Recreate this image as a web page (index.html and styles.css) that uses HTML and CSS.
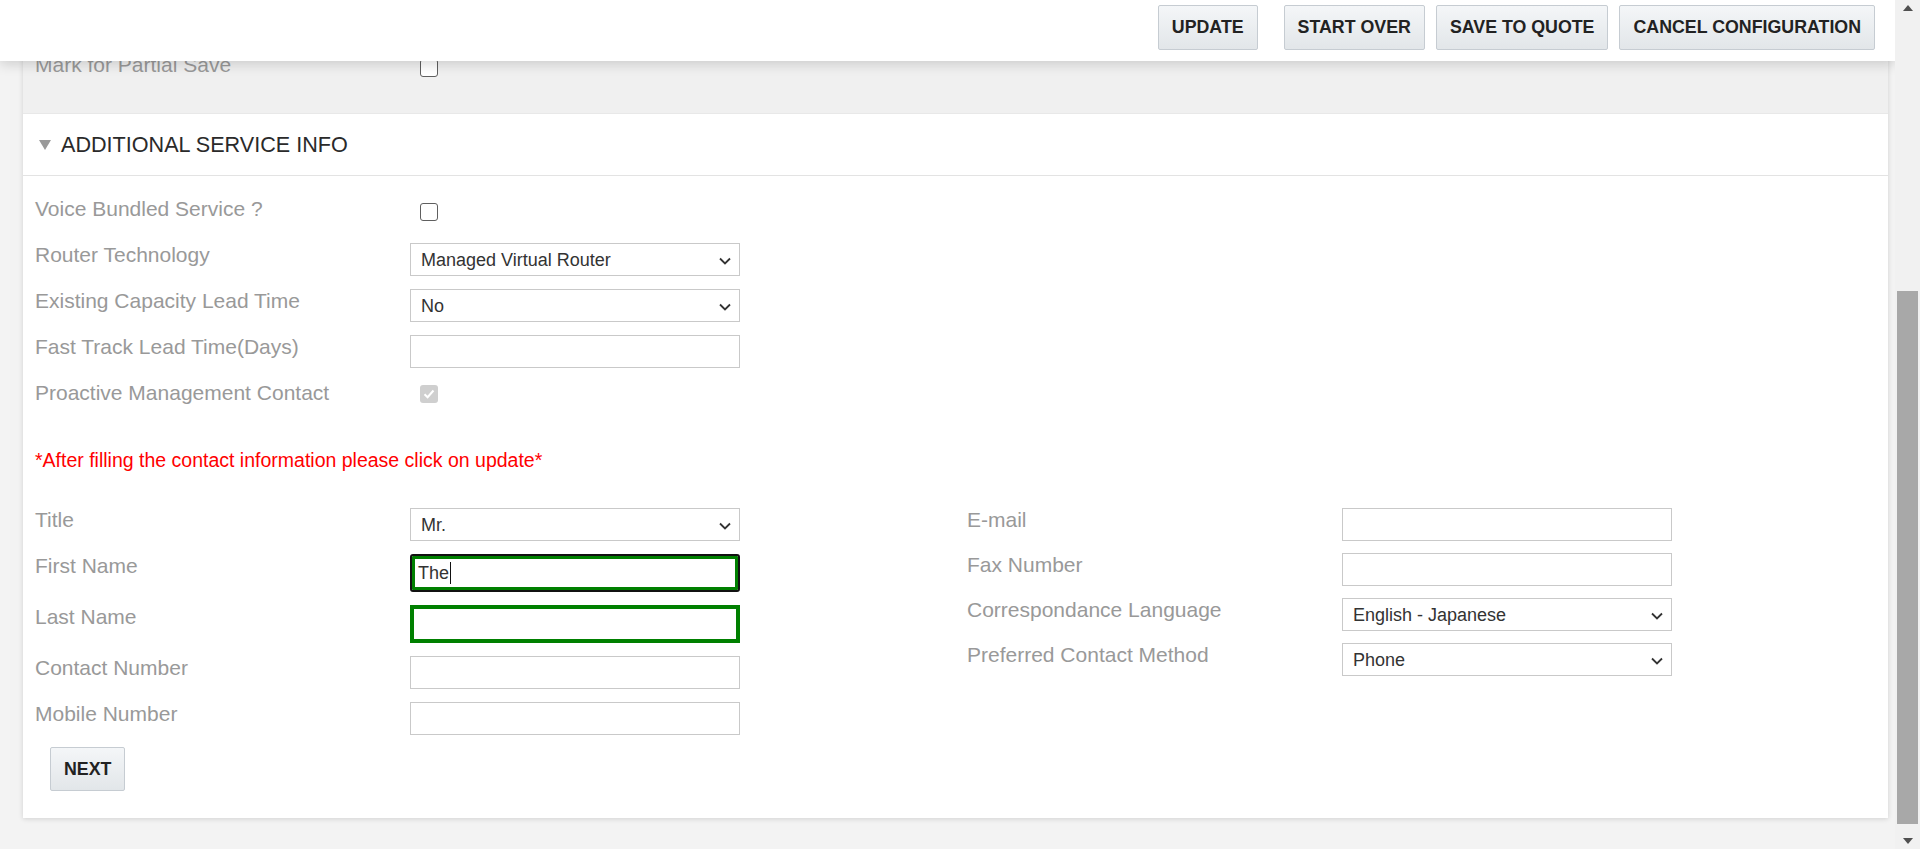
FILE: index.html
```html
<!DOCTYPE html>
<html lang="en">
<head>
<meta charset="utf-8">
<title>Configuration</title>
<link rel="stylesheet" href="styles.css">
</head>
<body>
<div class="app">
  <div class="viewport">
    <header class="topbar">
      <div class="actions">
        <button class="btn">UPDATE</button>
        <div class="btn-group">
          <button class="btn">START OVER</button>
          <button class="btn">SAVE TO QUOTE</button>
          <button class="btn">CANCEL CONFIGURATION</button>
        </div>
      </div>
    </header>

    <main class="card">
      <section class="prev-section">
        <div class="row">
          <span class="label">Mark for Partial Save</span>
          <div class="ctl"><span class="checkbox"></span></div>
        </div>
      </section>

      <section class="section">
        <div class="section-head">
          <svg class="caret-down" width="12" height="10" viewBox="0 0 12 10"><polygon points="0,0 12,0 6,10" fill="#9a9a9a"/></svg>
          <h2 class="section-title">ADDITIONAL SERVICE INFO</h2>
        </div>

        <div class="section-body">
          <div class="row">
            <span class="label">Voice Bundled Service ?</span>
            <div class="ctl"><span class="checkbox"></span></div>
          </div>
          <div class="row">
            <span class="label">Router Technology</span>
            <div class="ctl"><div class="select"><span>Managed Virtual Router</span><svg width="12" height="8" viewBox="0 0 12 8"><path d="M1 1.5 L6 6.5 L11 1.5" fill="none" stroke="#333" stroke-width="1.8"/></svg></div></div>
          </div>
          <div class="row">
            <span class="label">Existing Capacity Lead Time</span>
            <div class="ctl"><div class="select"><span>No</span><svg width="12" height="8" viewBox="0 0 12 8"><path d="M1 1.5 L6 6.5 L11 1.5" fill="none" stroke="#333" stroke-width="1.8"/></svg></div></div>
          </div>
          <div class="row">
            <span class="label">Fast Track Lead Time(Days)</span>
            <div class="ctl"><div class="input"></div></div>
          </div>
          <div class="row row-last">
            <span class="label">Proactive Management Contact</span>
            <div class="ctl"><span class="checkbox checked-disabled"><svg width="12" height="10" viewBox="0 0 12 10"><path d="M1.5 5.2 L4.6 8.2 L10.5 1.5" fill="none" stroke="#fff" stroke-width="2"/></svg></span></div>
          </div>

          <p class="note">*After filling the contact information please click on update*</p>

          <div class="contact-grid">
            <div class="col col-left">
              <div class="row">
                <span class="label">Title</span>
                <div class="ctl"><div class="select"><span>Mr.</span><svg width="12" height="8" viewBox="0 0 12 8"><path d="M1 1.5 L6 6.5 L11 1.5" fill="none" stroke="#333" stroke-width="1.8"/></svg></div></div>
              </div>
              <div class="row">
                <span class="label">First Name</span>
                <div class="ctl"><div class="input input-focus"><span>The</span><span class="text-caret"></span></div></div>
              </div>
              <div class="row">
                <span class="label">Last Name</span>
                <div class="ctl"><div class="input input-valid"></div></div>
              </div>
              <div class="row">
                <span class="label">Contact Number</span>
                <div class="ctl"><div class="input"></div></div>
              </div>
              <div class="row">
                <span class="label">Mobile Number</span>
                <div class="ctl"><div class="input"></div></div>
              </div>
            </div>
            <div class="col col-right">
              <div class="row">
                <span class="label">E-mail</span>
                <div class="ctl"><div class="input"></div></div>
              </div>
              <div class="row">
                <span class="label">Fax Number</span>
                <div class="ctl"><div class="input"></div></div>
              </div>
              <div class="row">
                <span class="label">Correspondance Language</span>
                <div class="ctl"><div class="select"><span>English - Japanese</span><svg width="12" height="8" viewBox="0 0 12 8"><path d="M1 1.5 L6 6.5 L11 1.5" fill="none" stroke="#333" stroke-width="1.8"/></svg></div></div>
              </div>
              <div class="row">
                <span class="label">Preferred Contact Method</span>
                <div class="ctl"><div class="select"><span>Phone</span><svg width="12" height="8" viewBox="0 0 12 8"><path d="M1 1.5 L6 6.5 L11 1.5" fill="none" stroke="#333" stroke-width="1.8"/></svg></div></div>
              </div>
            </div>
          </div>

          <button class="btn btn-next">NEXT</button>
        </div>
      </section>
    </main>
  </div>

  <div class="scrollbar">
    <svg class="sb-arrow" width="10" height="6" viewBox="0 0 10 6"><polygon points="0,6 10,6 5,0" fill="#505050"/></svg>
    <div class="sb-track"><div class="sb-thumb"></div></div>
    <svg class="sb-arrow" width="10" height="6" viewBox="0 0 10 6"><polygon points="0,0 10,0 5,6" fill="#505050"/></svg>
  </div>
</div>
</body>
</html>
```

FILE: styles.css
```css
* { box-sizing: border-box; }

html, body {
  margin: 0;
  padding: 0;
  height: 849px;
  overflow: hidden;
}

body {
  background: #f2f2f2;
  font-family: "Liberation Sans", Arial, sans-serif;
  color: #333;
}

.app {
  display: flex;
  height: 849px;
}

.viewport {
  flex: 1;
  position: relative;
  overflow: hidden;
  background: #f3f3f3;
}

/* top action bar (fixed over content) */
.topbar {
  position: absolute;
  top: 0;
  left: 0;
  right: 0;
  height: 61px;
  background: #fff;
  box-shadow: 0 3px 12px rgba(0, 0, 0, 0.16);
  z-index: 10;
  display: flex;
  justify-content: flex-end;
  padding: 5px 20px 0 0;
}

.actions {
  display: flex;
  gap: 26px;
}

.btn-group {
  display: flex;
  gap: 11px;
}

.btn {
  height: 45px;
  padding: 0 13px;
  font-family: "Liberation Sans", Arial, sans-serif;
  font-weight: bold;
  font-size: 17.8px;
  color: #222;
  background: linear-gradient(#f4f6f8, #e2e6e9);
  border: 1px solid #c6ccd2;
  border-radius: 2px;
  cursor: pointer;
}

/* card */
.card {
  margin: 0 7px 0 23px;
  box-shadow: 0 1px 5px rgba(0, 0, 0, 0.14);
  background: #fff;
}

.prev-section {
  height: 113px;
  padding: 53px 0 0 12px;
  background: #f0f0f0;
}

.section-head {
  height: 63px;
  display: flex;
  align-items: center;
  padding-left: 16px;
  padding-top: 1px;
  border-top: 1px solid #e8e8e8;
  border-bottom: 1px solid #e3e3e3;
  background: #fff;
}

.caret-down {
  margin-right: 10px;
}

.section-title {
  margin: 0;
  font-weight: normal;
  font-size: 21.6px;
  color: #2a2a2a;
}

.section-body {
  padding: 21px 12px 27px 12px;
}

/* rows */
.row {
  display: flex;
  align-items: flex-start;
  min-height: 33px;
  margin-bottom: 13px;
}

.row-last {
  margin-bottom: 0;
}

.label {
  width: 375px;
  flex: none;
  font-size: 21px;
  line-height: 24px;
  color: #999;
}

.ctl {
  width: 330px;
  flex: none;
}

.checkbox {
  display: flex;
  align-items: center;
  justify-content: center;
  width: 18px;
  height: 18px;
  margin: 6px 0 0 10px;
  border: 1px solid #5f5f5f;
  border-radius: 3px;
  background: #fff;
}

.checked-disabled {
  margin-top: 4px;
  border: none;
  background: #cfcfcf;
}

.select {
  height: 33px;
  display: flex;
  align-items: center;
  justify-content: space-between;
  padding: 2px 8px 0 10px;
  border: 1px solid #c9c9c9;
  background: #fff;
  font-size: 18px;
  color: #333;
}

.input {
  height: 33px;
  display: flex;
  align-items: center;
  padding: 0 10px;
  border: 1px solid #c9c9c9;
  background: #fff;
  font-size: 18px;
  color: #333;
}

.input-focus {
  height: 38px;
  border: 2px solid #111;
  border-radius: 3px;
  box-shadow: inset 0 0 0 3px #008000;
  padding-left: 6px;
}

.text-caret {
  display: inline-block;
  width: 1px;
  height: 22px;
  background: #111;
  margin-left: 1px;
}

.input-valid {
  height: 38px;
  border: 4px solid #008000;
}

.note {
  margin: 34px 0 36px 0;
  font-size: 19.5px;
  line-height: 24px;
  color: #f00;
}

.contact-grid {
  display: grid;
  grid-template-columns: 932px 1fr;
}

.col-right .row {
  margin-bottom: 12px;
}

.btn-next {
  margin: -1px 0 0 15px;
  height: 44px;
}

/* fake scrollbar */
.scrollbar {
  width: 25px;
  flex: none;
  background: #f1f1f1;
  display: flex;
  flex-direction: column;
  align-items: center;
}

.sb-arrow {
  flex: none;
  margin: 5px 0;
}

.sb-track {
  flex: 1;
  width: 100%;
  padding: 275px 2px 9px 2px;
}

.sb-thumb {
  height: 100%;
  background: #a8a8a8;
}
```
